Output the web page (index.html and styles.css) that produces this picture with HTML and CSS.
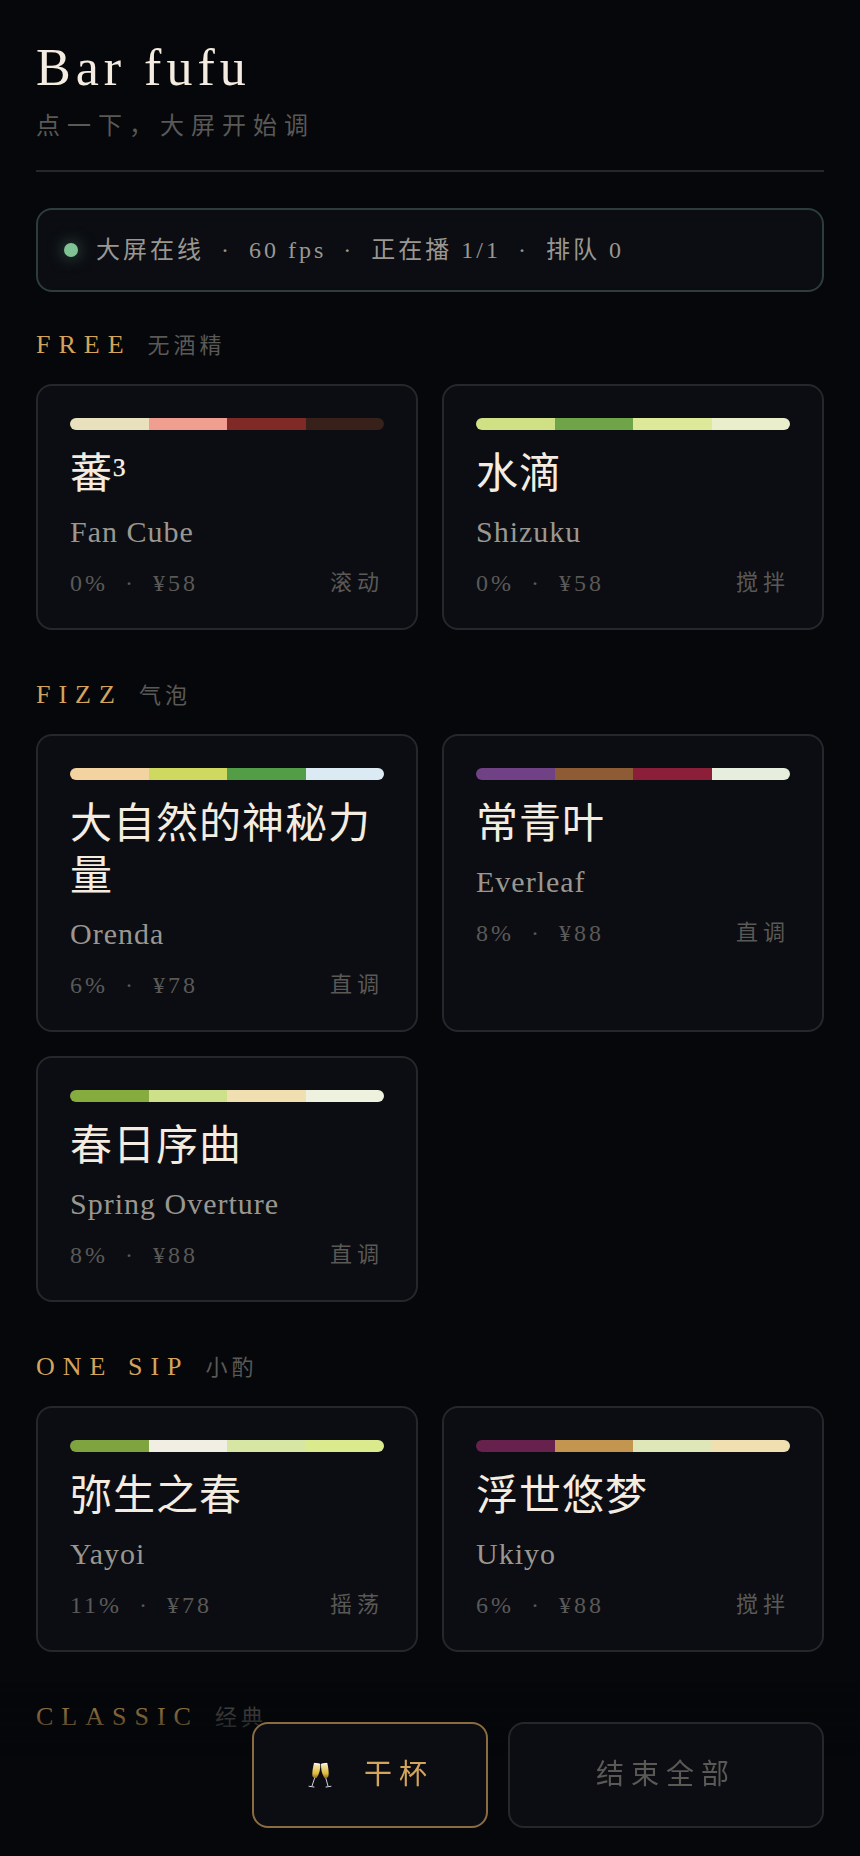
FILE: index.html
```html
<!DOCTYPE html>
<html lang="zh-CN">
<head>
<meta charset="utf-8">
<meta name="viewport" content="width=device-width, initial-scale=1">
<title>Bar fufu</title>
<link rel="stylesheet" href="styles.css">
</head>
<body>
<main class="page">
  <header class="masthead">
    <h1 class="brand">Bar fufu</h1>
    <p class="tagline">点一下，大屏开始调</p>
  </header>

  <div class="status" role="status">
    <span class="status-dot"></span>
    <span class="facts"><span>大屏在线</span><span>·</span><span>60 fps</span><span>·</span><span>正在播 1/1</span><span>·</span><span>排队 0</span></span>
  </div>

  <section class="menu">
    <h2 class="menu-title">FREE<span class="menu-sub">无酒精</span></h2>
    <div class="cards">
      <button class="card" type="button">
        <span class="swatches"><i style="background:#e9e1bd"></i><i style="background:#ef9e90"></i><i style="background:#7f2a27"></i><i style="background:#37211a"></i></span>
        <span class="name">蕃³</span>
        <span class="latin">Fan Cube</span>
        <span class="meta"><span class="facts"><span>0%</span><span>·</span><span>¥58</span></span><span class="method">滚动</span></span>
      </button>
      <button class="card" type="button">
        <span class="swatches"><i style="background:#cfe085"></i><i style="background:#6fa548"></i><i style="background:#dde998"></i><i style="background:#ebeecb"></i></span>
        <span class="name">水滴</span>
        <span class="latin">Shizuku</span>
        <span class="meta"><span class="facts"><span>0%</span><span>·</span><span>¥58</span></span><span class="method">搅拌</span></span>
      </button>
    </div>
  </section>

  <section class="menu">
    <h2 class="menu-title">FIZZ<span class="menu-sub">气泡</span></h2>
    <div class="cards">
      <button class="card" type="button">
        <span class="swatches"><i style="background:#f3d3a0"></i><i style="background:#cfd960"></i><i style="background:#529d45"></i><i style="background:#dcebf3"></i></span>
        <span class="name">大自然的神秘力量</span>
        <span class="latin">Orenda</span>
        <span class="meta"><span class="facts"><span>6%</span><span>·</span><span>¥78</span></span><span class="method">直调</span></span>
      </button>
      <button class="card" type="button">
        <span class="swatches"><i style="background:#714186"></i><i style="background:#8d5c35"></i><i style="background:#8b1e38"></i><i style="background:#e7eedd"></i></span>
        <span class="name">常青叶</span>
        <span class="latin">Everleaf</span>
        <span class="meta"><span class="facts"><span>8%</span><span>·</span><span>¥88</span></span><span class="method">直调</span></span>
      </button>
      <button class="card" type="button">
        <span class="swatches"><i style="background:#86ac40"></i><i style="background:#cfe08a"></i><i style="background:#f0dfb0"></i><i style="background:#edf1de"></i></span>
        <span class="name">春日序曲</span>
        <span class="latin">Spring Overture</span>
        <span class="meta"><span class="facts"><span>8%</span><span>·</span><span>¥88</span></span><span class="method">直调</span></span>
      </button>
    </div>
  </section>

  <section class="menu">
    <h2 class="menu-title">ONE SIP<span class="menu-sub">小酌</span></h2>
    <div class="cards">
      <button class="card" type="button">
        <span class="swatches"><i style="background:#7fa33f"></i><i style="background:#f1eee4"></i><i style="background:#d7e6a2"></i><i style="background:#dbea8c"></i></span>
        <span class="name">弥生之春</span>
        <span class="latin">Yayoi</span>
        <span class="meta"><span class="facts"><span>11%</span><span>·</span><span>¥78</span></span><span class="method">摇荡</span></span>
      </button>
      <button class="card" type="button">
        <span class="swatches"><i style="background:#67214d"></i><i style="background:#c39650"></i><i style="background:#dfe6b8"></i><i style="background:#f0dfb0"></i></span>
        <span class="name">浮世悠梦</span>
        <span class="latin">Ukiyo</span>
        <span class="meta"><span class="facts"><span>6%</span><span>·</span><span>¥88</span></span><span class="method">搅拌</span></span>
      </button>
    </div>
  </section>

  <section class="menu">
    <h2 class="menu-title">CLASSIC<span class="menu-sub">经典</span></h2>
  </section>
</main>

<footer class="actions">
  <button class="action action-cheers" type="button">
    <svg class="glasses" viewBox="0 0 24 26" aria-hidden="true">
      <defs>
        <linearGradient id="wine" x1="0" y1="0" x2="0" y2="1">
          <stop offset="0" stop-color="#f4f1e6"/>
          <stop offset=".25" stop-color="#eedb8e"/>
          <stop offset=".7" stop-color="#e0b93c"/>
          <stop offset="1" stop-color="#8f6b1c"/>
        </linearGradient>
      </defs>
      <g stroke="#cfd2d8" stroke-width="1" stroke-linecap="round" fill="none">
        <path d="M7 15 L4 24 M1 24.300 L6 25"/>
        <path d="M17.500 15 L20 24 M18 25 L23 24.300"/>
      </g>
      <path fill="url(#wine)" d="M6 1 L12.300 2 C12.400 7 11.500 12 8.500 16 C6 16.600 4.400 15 4.300 13 C4.200 9 5 5 6 1Z"/>
      <path fill="url(#wine)" d="M13 2 L19.300 1 C20.200 5 20.800 9 20.600 13 C20.400 15 18.800 16.600 16.500 16 C13.800 12 12.900 7 13 2Z"/>
      <path d="M6.300 1.300 L11.900 2.200 M13.400 2.200 L19 1.300" stroke="#fff" stroke-width="1" fill="none"/>
    </svg>
    <span>干杯</span>
  </button>
  <button class="action action-end" type="button">结束全部</button>
</footer>
</body>
</html>
```

FILE: styles.css
```css
:root {
  --bg: #05070a;
  --panel: #0b0d12;
  --line: #25272b;
  --cream: #f4ece0;
  --soft: #9a9791;
  --dim: #5a5956;
  --gold: #d4a45c;
}

* {
  box-sizing: border-box;
}

body {
  margin: 0;
  background: var(--bg);
  color: var(--cream);
  font-family: "Liberation Serif", "Noto Sans CJK SC", serif;
}

h1,
h2,
p {
  margin: 0;
  font-weight: 400;
}

button {
  margin: 0;
  font: inherit;
  color: inherit;
  cursor: pointer;
}

.page {
  padding: 36px 36px 80px;
}

.masthead {
  padding-bottom: 26px;
  border-bottom: 2px solid var(--line);
}

.brand {
  font-size: 52px;
  line-height: 64px;
  letter-spacing: 5px;
}

.tagline {
  margin-top: 8px;
  font-size: 24px;
  line-height: 36px;
  letter-spacing: 7px;
  color: var(--dim);
}

.status {
  display: flex;
  align-items: center;
  gap: 18px;
  margin: 36px 0 32px;
  padding: 22px 26px;
  border: 2px solid #2c3d3b;
  border-radius: 16px;
  background: var(--panel);
  color: var(--soft);
  font-size: 24px;
  line-height: 36px;
  letter-spacing: 3px;
}

.status-dot {
  flex: none;
  width: 14px;
  height: 14px;
  border-radius: 50%;
  background: #7fc294;
  box-shadow: 0 0 16px rgba(127, 194, 148, 0.5);
}

.facts {
  display: flex;
  gap: 17px;
}

.menu {
  margin-bottom: 44px;
}

.menu-title {
  display: flex;
  align-items: baseline;
  gap: 16px;
  margin-bottom: 18px;
  font-size: 26px;
  line-height: 42px;
  letter-spacing: 8px;
  color: var(--gold);
}

.menu-sub {
  font-size: 22px;
  line-height: 30px;
  letter-spacing: 4px;
  color: var(--dim);
}

.cards {
  display: grid;
  grid-template-columns: repeat(2, minmax(0, 1fr));
  gap: 24px;
}

.card {
  display: flex;
  flex-direction: column;
  justify-content: flex-start;
  padding: 32px;
  border: 2px solid var(--line);
  border-radius: 16px;
  background: var(--panel);
  text-align: left;
}

.swatches {
  display: flex;
  height: 12px;
  border-radius: 6px;
  overflow: hidden;
}

.swatches i {
  flex: 1;
}

.name {
  margin-top: 18px;
  font-size: 42px;
  line-height: 52px;
  letter-spacing: 1px;
}

.latin {
  margin-top: 14px;
  font-size: 30px;
  line-height: 36px;
  letter-spacing: 1px;
  color: var(--soft);
}

.meta {
  display: flex;
  justify-content: space-between;
  margin-top: 20px;
  font-size: 24px;
  line-height: 26px;
  letter-spacing: 3px;
  color: var(--dim);
}

.method {
  font-size: 22px;
  letter-spacing: 5px;
}

.actions {
  position: fixed;
  right: 0;
  bottom: 0;
  left: 0;
  display: flex;
  justify-content: flex-end;
  gap: 20px;
  padding: 40px 36px 28px;
  background: linear-gradient(to bottom, transparent, var(--bg) 44%);
}

.action {
  display: flex;
  align-items: center;
  justify-content: center;
  border: 2px solid var(--line);
  border-radius: 16px;
  background: var(--panel);
  font-size: 28px;
  line-height: 42px;
  letter-spacing: 7px;
}

.action-cheers {
  gap: 32px;
  padding: 30px 52px 30px 54px;
  border-color: #8a6c42;
  color: var(--gold);
}

.action-end {
  padding: 30px 86px;
  color: var(--dim);
}

.glasses {
  width: 24px;
  height: 26px;
}
```
